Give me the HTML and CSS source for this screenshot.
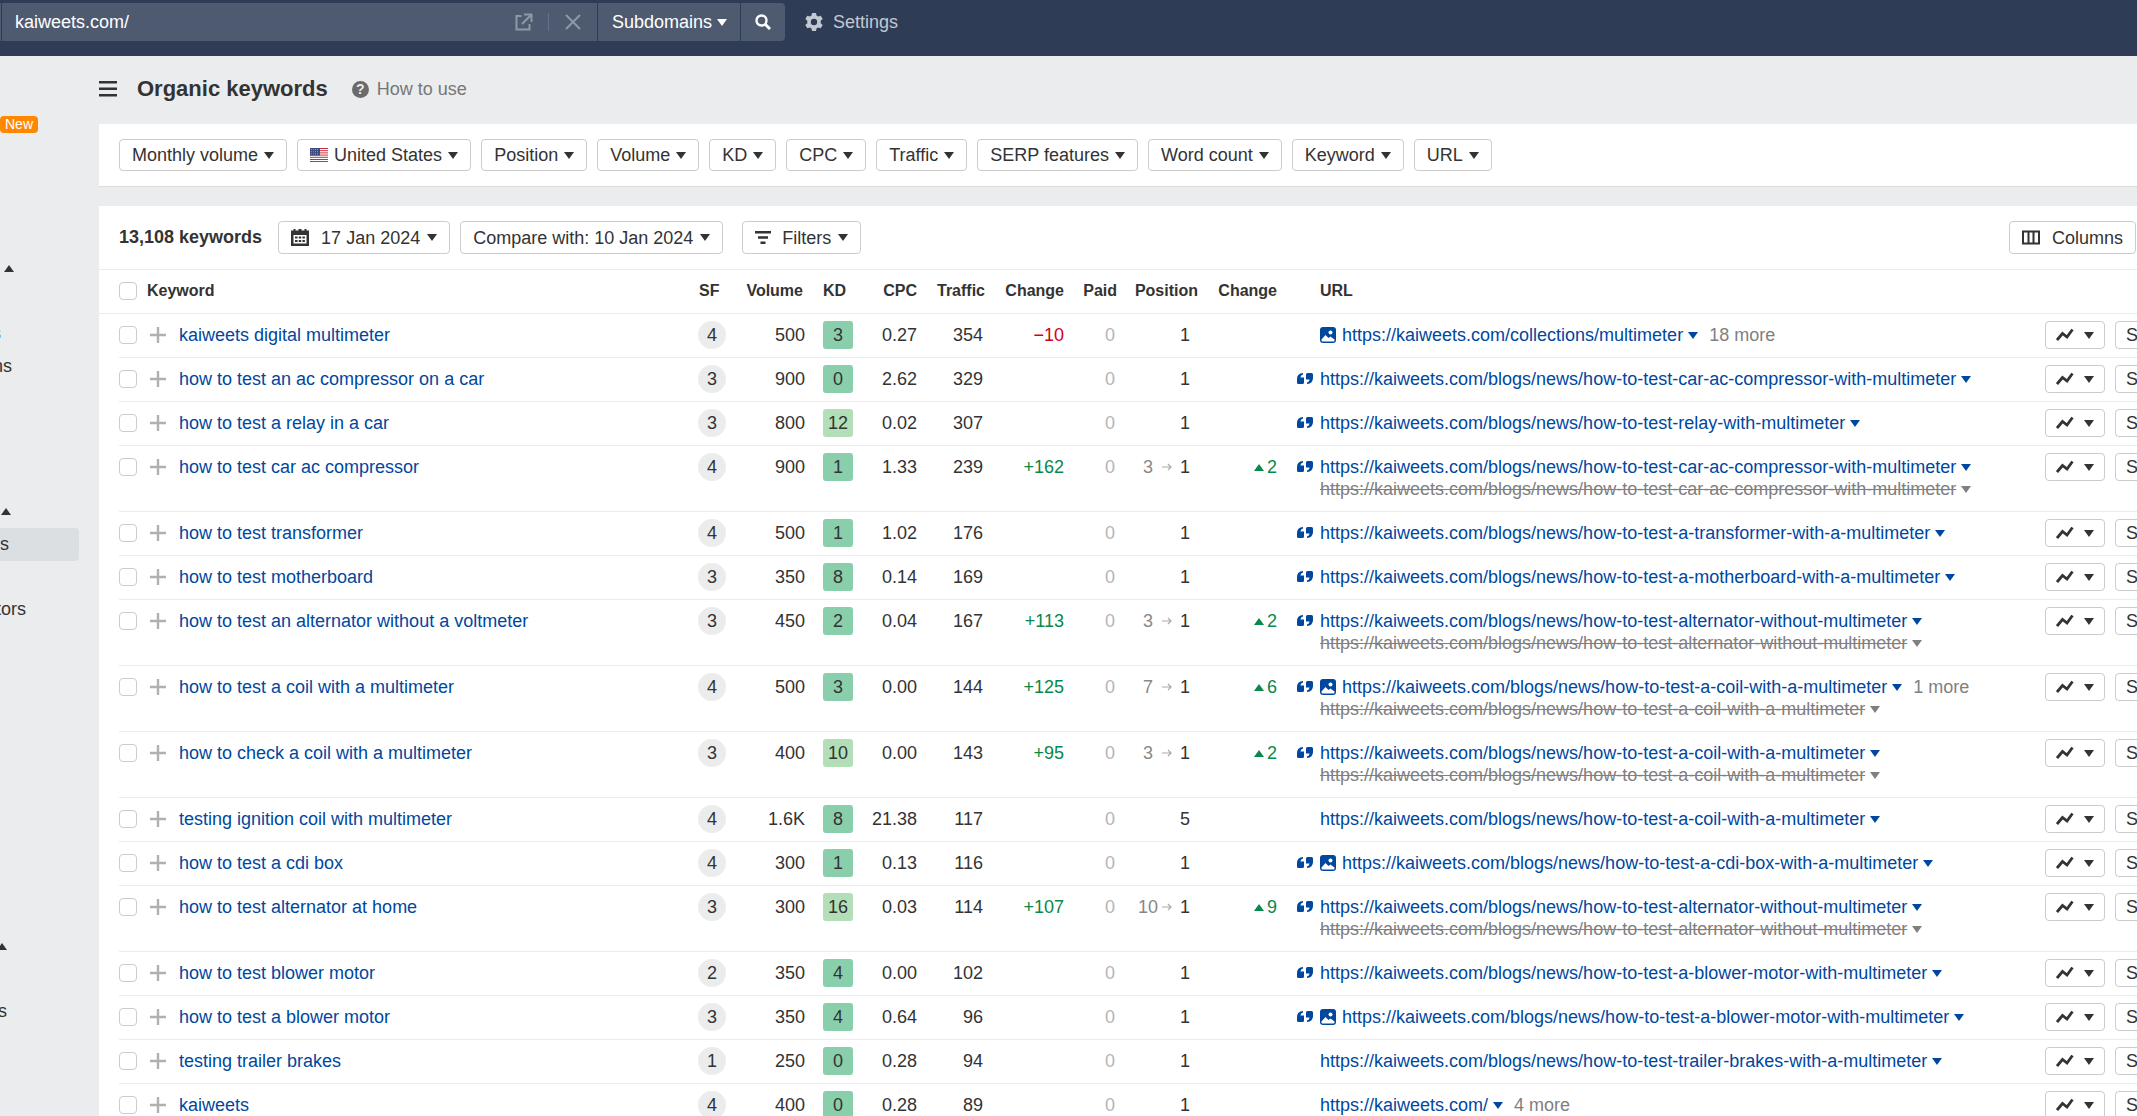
FILE: index.html
```html
<!DOCTYPE html>
<html lang="en">
<head>
    <meta charset="UTF-8">
    <meta name="viewport" content="width=device-width, initial-scale=1.0">
    <title>Organic keywords</title>
    <link rel="stylesheet" href="styles.css">
</head>
<body>
    <svg class="sprite" aria-hidden="true">
        <symbol id="i-plus" viewBox="0 0 16 16"><path d="M8 0v16M0 8h16" fill="none" stroke="currentColor" stroke-width="2.4"/></symbol>
        <symbol id="i-quote" viewBox="0 0 16 12">
            <path d="M6 0v1.600Q3.600 2 3.400 4.400H7V9.500Q7 11 5.500 11H1.500Q0 11 0 9.500V6Q0 .6 6 0Z" fill="currentColor"/>
            <path d="M10 11V9.400Q12.400 9 12.600 6.600H9V1.500Q9 0 10.500 0H14.500Q16 0 16 1.500V5Q16 10.400 10 11Z" fill="currentColor"/>
        </symbol>
        <symbol id="i-image" viewBox="0 0 16 16">
            <rect width="16" height="16" rx="3" fill="currentColor"/>
            <circle cx="10.500" cy="5.500" r="2" fill="#fff"/>
            <path d="M1.500 12.500L5.500 8L8.500 11L10.500 9.500L14.500 12.500V13.500Q14.500 14.500 13.500 14.500H2.500Q1.500 14.500 1.500 13.500Z" fill="#fff"/>
        </symbol>
        <symbol id="i-chart" viewBox="0 0 18 14"><path d="M1 12L6.500 5.500L11 9L16.500 1.500" fill="none" stroke="currentColor" stroke-width="2.800"/></symbol>
        <symbol id="i-arrow" viewBox="0 0 10 8"><path d="M0 4h9M6 1l3 3l-3 3" fill="none" stroke="currentColor" stroke-width="1.200"/></symbol>
    </svg>

    <header class="topbar">
        <div class="search">
            <div class="search-field">
                <input type="text" aria-label="Domain or URL" value="kaiweets.com/">
                <button class="icon-button" aria-label="Open in new tab">
                    <svg width="18" height="18" viewBox="0 0 18 18" fill="none" stroke="currentColor" stroke-width="2"><path d="M6.500 3H1.500v13.500h13V11M9 1.500h7.500V9M16 2L7 11"/></svg>
                </button>
                <span class="divider"></span>
                <button class="icon-button" aria-label="Clear">
                    <svg width="16" height="16" viewBox="0 0 16 16" fill="none" stroke="currentColor" stroke-width="2"><path d="M1 1l14 14M15 1L1 15"/></svg>
                </button>
            </div>
            <div class="mode">
                <select aria-label="Mode"><option>Subdomains</option></select>
                <span class="caret"></span>
            </div>
            <button class="search-button" aria-label="Search">
                <svg width="16" height="16" viewBox="0 0 16 16" fill="none" stroke="currentColor"><circle cx="6.500" cy="6.500" r="5" stroke-width="2.400"/><path d="M10 10l5 5" stroke-width="3"/></svg>
            </button>
        </div>
        <button class="settings">
            <svg width="18" height="18" viewBox="0 0 18 18" fill="currentColor" fill-rule="evenodd"><path d="M7 0h4l.5 2.600 1.700 1 2.500-.9 2 3.400-2 1.700v2.400l2 1.700-2 3.400-2.500-.9-1.700 1L11 18H7l-.5-2.600-1.700-1-2.500.9-2-3.400 2-1.700V7.800l-2-1.700 2-3.400 2.500.9 1.700-1zM9 5.800a3.200 3.200 0 1 0 0 6.400a3.200 3.200 0 1 0 0-6.400z"/></svg>
            Settings
        </button>
    </header>

    <div class="layout">
        <nav class="sidebar">
            <span class="badge-new">New</span>
            <ul class="nav-group nav-group-first">
                <li class="nav-toggle"><span class="caret-up"></span></li>
                <li class="nav-gap nav-link"><a href="#">s</a></li>
                <li class="nav-overview"><a href="#">ns</a></li>
            </ul>
            <ul class="nav-group nav-group-search">
                <li class="nav-toggle"><span class="caret-up"></span></li>
                <li class="active"><a href="#">s</a></li>
                <li class="nav-gap"><a href="#">tors</a></li>
            </ul>
            <ul class="nav-group nav-group-last">
                <li class="nav-toggle"><span class="caret-up"></span></li>
                <li class="nav-gap"><a href="#">s</a></li>
            </ul>
        </nav>

        <main>
            <div class="title-row">
                <button class="menu-button" aria-label="Toggle menu">
                    <svg width="18" height="16" viewBox="0 0 18 16" fill="currentColor"><path d="M0 0h18v2.500H0zM0 6.500h18v2.500H0zM0 13h18v2.500H0z"/></svg>
                </button>
                <h1>Organic keywords</h1>
                <a class="help" href="#"><span class="help-icon">?</span>How to use</a>
            </div>

            <section class="card filters">
                <button class="btn">Monthly volume<span class="caret"></span></button>
                <button class="btn">
                    <svg class="flag" width="18" height="14" viewBox="0 0 18 14">
                        <rect width="18" height="14" fill="#fff"/>
                        <path d="M0 .5h18M0 2.700h18M0 4.900h18M0 7.100h18M0 9.300h18M0 11.500h18M0 13.500h18" stroke="#c8313e"/>
                        <rect width="10" height="7.500" fill="#3a4a7d"/>
                        <path d="M1 1.500h8M1 3.700h8M1 5.900h8" stroke="#8f9abb" stroke-dasharray="1 1"/>
                    </svg>
                    United States<span class="caret"></span>
                </button>
                <button class="btn">Position<span class="caret"></span></button>
                <button class="btn">Volume<span class="caret"></span></button>
                <button class="btn">KD<span class="caret"></span></button>
                <button class="btn">CPC<span class="caret"></span></button>
                <button class="btn">Traffic<span class="caret"></span></button>
                <button class="btn">SERP features<span class="caret"></span></button>
                <button class="btn">Word count<span class="caret"></span></button>
                <button class="btn">Keyword<span class="caret"></span></button>
                <button class="btn">URL<span class="caret"></span></button>
            </section>

            <section class="card">
                <div class="toolbar">
                    <strong class="total">13,108 keywords</strong>
                    <button class="btn">
                        <svg class="calendar" width="18" height="17" viewBox="0 0 18 17">
                            <path d="M0 1.500h2.500V0h2v1.500h3V0h3v1.500h3V0h2v1.500H18V17H0z" fill="#333"/>
                            <path d="M2.500 6h13v8.500h-13z" fill="#fff"/>
                            <path d="M4 8.500h10M4 12h10" stroke="#333" stroke-width="2.200" stroke-dasharray="2.500 1.200"/>
                        </svg>
                        17 Jan 2024<span class="caret"></span>
                    </button>
                    <button class="btn">Compare with: 10 Jan 2024<span class="caret"></span></button>
                    <button class="btn btn-filters">
                        <svg class="lines" width="16" height="13" viewBox="0 0 16 13" fill="#333"><path d="M0 0h16v2.500H0zM3 5.200h10v2.500H3zM5.500 10.400h5v2.500h-5z"/></svg>
                        Filters<span class="caret"></span>
                    </button>
                    <button class="btn btn-columns">
                        <svg width="18" height="15" viewBox="0 0 18 15" fill="none" stroke="#333" stroke-width="2"><path d="M1 1.500h16v12H1zM6.500 1v13M11.500 1v13"/></svg>
                        Columns
                    </button>
                </div>

                <table class="keywords">
                    <colgroup>
                        <col class="c-check"><col class="c-plus"><col class="c-keyword"><col class="c-sf">
                        <col class="c-volume"><col class="c-kd"><col class="c-cpc"><col class="c-traffic">
                        <col class="c-change"><col class="c-paid"><col class="c-position"><col class="c-change">
                        <col><col class="c-actions">
                    </colgroup>
                    <thead>
                        <tr>
                            <th colspan="3" class="h-keyword"><label><input type="checkbox">Keyword</label></th>
                            <th class="h-sf">SF</th>
                            <th class="h-volume">Volume</th>
                            <th class="kd">KD</th>
                            <th>CPC</th>
                            <th>Traffic</th>
                            <th>Change</th>
                            <th>Paid</th>
                            <th>Position</th>
                            <th>Change</th>
                            <th class="h-url">URL</th>
                            <th></th>
                        </tr>
                    </thead>
                    <tbody id="rows"></tbody>
                </table>
            </section>
        </main>
    </div>

    <script src="script.js"></script>
</body>
</html>
```

FILE: styles.css
```css
* {
    box-sizing: border-box;
}
body {
    margin: 0;
    height: 100vh;
    display: flex;
    flex-direction: column;
    overflow: hidden;
    font-family: "Liberation Sans", Arial, sans-serif;
    font-size: 18px;
    line-height: 22px;
    color: #333;
    background-color: #ebeced;
}
button, input, select {
    font: inherit;
    color: inherit;
}
button {
    padding: 0;
    border: none;
    background: none;
    cursor: pointer;
}
a {
    color: inherit;
    text-decoration: none;
}
svg {
    display: block;
    flex: none;
}
.sprite {
    position: absolute;
    width: 0;
    height: 0;
}
.caret, .caret-up {
    flex: none;
    border: 5px solid transparent;
    border-top: 7px solid currentColor;
    border-bottom: none;
}
.caret-up {
    border-top: none;
    border-bottom: 7px solid currentColor;
}

/* Top bar */
.topbar {
    flex: none;
    display: flex;
    align-items: center;
    height: 56px;
    padding: 3px 0 15px;
    gap: 20px;
    background-color: #2f3c56;
    color: white;
}
.search {
    display: flex;
    gap: 1px;
    width: 785px;
    height: 38px;
    border-left: 1px solid #4e5a70;
    padding-left: 1px;
}
.search-field, .mode, .search-button {
    display: flex;
    align-items: center;
    background-color: #4e5a70;
}
.search-field {
    flex: 1;
    padding: 0 16px 0 13px;
    color: #8f98a8;
}
.search-field input {
    flex: 1;
    min-width: 0;
    padding: 0;
    border: none;
    outline: none;
    background: none;
    color: white;
}
.divider {
    width: 1px;
    height: 18px;
    margin: 0 16px 0 15px;
    background-color: #66728a;
}
.mode {
    position: relative;
    width: 142px;
}
.mode select {
    width: 100%;
    height: 100%;
    padding: 0 0 0 14px;
    border: none;
    appearance: none;
    background: none;
}
.mode .caret {
    position: absolute;
    right: 13px;
    pointer-events: none;
}
.search-button {
    width: 44px;
    justify-content: center;
    border-radius: 0 4px 4px 0;
}
.settings {
    display: flex;
    align-items: center;
    gap: 10px;
    color: #c3c8d1;
}

/* Layout */
.layout {
    flex: 1;
    min-height: 0;
    display: flex;
}
.sidebar {
    flex: none;
    width: 99px;
    padding-top: 60px;
    overflow: hidden;
}
.badge-new {
    display: block;
    width: 38px;
    height: 17px;
    padding-left: 5px;
    border-radius: 4px;
    background-color: #ff8800;
    color: white;
    font-size: 14px;
    line-height: 17px;
}
.nav-group {
    list-style: none;
    margin: 0;
    padding: 0;
}
.nav-group li {
    height: 33px;
    line-height: 33px;
}
.nav-group .nav-gap {
    margin-top: 32px;
}
.nav-toggle {
    display: flex;
    align-items: center;
    padding-left: 4px;
}
.nav-group-first {
    margin-top: 119px;
}
.nav-group-search {
    margin-top: 112px;
}
.nav-group-last {
    margin-top: 304px;
}
.nav-link {
    margin-left: -8px;
    color: #1a7fd0;
}
.nav-overview {
    margin-left: -7px;
}
.nav-group-search .nav-toggle {
    padding-left: 1px;
}
.nav-group-last .nav-toggle {
    margin-left: -3px;
    padding: 0;
}
.nav-group-last a {
    margin-left: -2px;
}
.nav-group-search .nav-gap {
    margin-left: -4px;
}
.nav-group .active {
    width: 79px;
    border-radius: 0 4px 4px 0;
    background-color: #dcdfe2;
}

main {
    flex: 1;
    min-width: 0;
}
.title-row {
    display: flex;
    align-items: center;
    height: 68px;
    padding-bottom: 2px;
}
h1 {
    margin: 0 24px 0 20px;
    font-size: 22px;
    line-height: 28px;
}
.help {
    display: flex;
    align-items: center;
    gap: 8px;
    color: #777;
}
.help-icon {
    width: 17px;
    height: 17px;
    border-radius: 50%;
    background-color: #6b6b6b;
    color: #ebeced;
    font-size: 14px;
    font-weight: bold;
    line-height: 17px;
    text-align: center;
}
.card {
    background-color: white;
    border-bottom: 1px solid #dcdcdc;
}
.btn {
    display: inline-flex;
    align-items: center;
    gap: 7px;
    height: 32px;
    padding: 0 12px;
    border: 1px solid #ccc;
    border-radius: 4px;
    background-color: white;
    white-space: nowrap;
}
.filters {
    display: flex;
    gap: 10px;
    margin-bottom: 19px;
    padding: 15px 20px;
}
.filters .btn {
    gap: 6px;
}
.toolbar {
    display: flex;
    gap: 10px;
    padding: 15px 1px 15px 20px;
    border-bottom: 1px solid #ebebeb;
}
.toolbar .btn {
    height: 33px;
}
.total {
    margin-right: 6px;
    line-height: 33px;
}
.calendar {
    margin-right: 5px;
}
.lines {
    margin-right: 4px;
}
.btn-filters {
    margin-left: 9px;
}
.toolbar .btn-columns {
    gap: 12px;
    margin-left: auto;
}

/* Keywords table */
.keywords {
    width: calc(100% - 20px);
    margin-left: 20px;
    border-spacing: 0;
    table-layout: fixed;
}
.c-check { width: 31px; }
.c-plus { width: 29px; }
.c-keyword { width: 519px; }
.c-sf { width: 28px; }
.c-volume { width: 79px; }
.c-kd { width: 48px; }
.c-cpc { width: 64px; }
.c-traffic { width: 68px; }
.c-change { width: 79px; }
.c-paid { width: 53px; }
.c-position { width: 81px; }
.c-actions { width: 92px; }

.keywords th, .keywords td {
    padding: 10px 0 11px;
    border-bottom: 1px solid #ebebeb;
    text-align: right;
    vertical-align: top;
    white-space: nowrap;
}
.keywords th {
    font-size: 16px;
}
.keywords .h-keyword, .keywords .h-sf, .keywords .h-url {
    text-align: left;
}
.h-keyword {
    position: relative;
}
/* carries the header rule out to the edge of the card */
.h-keyword::after {
    content: "";
    position: absolute;
    left: -20px;
    bottom: -1px;
    width: 20px;
    height: 1px;
    background-color: #ebebeb;
}
.h-keyword label {
    display: flex;
    align-items: center;
    gap: 10px;
}
.keywords .h-sf {
    padding-left: 1px;
}
.keywords .h-volume {
    padding-right: 2px;
}
.keywords .h-url {
    padding-left: 43px;
}
.keywords input {
    appearance: none;
    display: block;
    width: 18px;
    height: 18px;
    margin: 0;
    border: 1px solid #ccc;
    border-radius: 4px;
    background-color: white;
}
.keywords td input {
    margin: 2px 0;
}
.add {
    display: block;
    margin: 3px 0;
    color: #b0b0b0;
}
.keywords .keyword {
    text-align: left;
    color: #00479f;
}
.sf, .kd-value {
    display: block;
    width: 28px;
    height: 28px;
    margin: -3px 0;
    border-radius: 50%;
    background-color: #ebecec;
    line-height: 28px;
    text-align: center;
}
.keywords .kd {
    padding-left: 18px;
    text-align: left;
}
.kd-value {
    width: 30px;
    border-radius: 3px;
    background-color: #8acfab;
}
.kd-value.medium {
    background-color: #b2deb8;
}
.keywords .traffic, .keywords .paid {
    padding-right: 2px;
}
.paid {
    color: #b5b5b5;
}
.up {
    color: #08884b;
}
.down {
    color: #d0021b;
}
.keywords .position {
    padding-right: 8px;
}
.position div, .gain {
    display: flex;
    align-items: center;
    justify-content: flex-end;
}
.position .old {
    width: 20px;
    margin-right: 4px;
    color: #888;
    text-align: center;
}
.position svg {
    margin-right: 8px;
    color: #aaa;
}
.gain {
    gap: 3px;
}
.keywords .url {
    padding-left: 20px;
}
.url div {
    display: flex;
    align-items: center;
    color: #00479f;
}
.url .slot {
    flex: none;
    width: 23px;
}
.url .image {
    margin-right: 6px;
}
.url .caret {
    margin-left: 5px;
}
.url .more {
    margin-left: 11px;
    color: #808080;
}
.url .previous {
    color: #808080;
}
.url .previous a {
    text-decoration: line-through 1px;
}
.keywords .actions div {
    display: flex;
    gap: 10px;
    margin: -3px 0;
}
.actions .btn {
    height: 28px;
    padding: 0 10px;
}
.actions .trend {
    gap: 10px;
}
```

FILE: script.js
```js
const SITE = 'https://kaiweets.com/';
const NEWS = SITE + 'blogs/news/';

const keywords = [
    { keyword: 'kaiweets digital multimeter', sf: 4, volume: '500', kd: 3, cpc: '0.27', traffic: 354, change: '−10', position: 1, url: SITE + 'collections/multimeter', image: true, more: 18 },
    { keyword: 'how to test an ac compressor on a car', sf: 3, volume: '900', kd: 0, cpc: '2.62', traffic: 329, position: 1, url: NEWS + 'how-to-test-car-ac-compressor-with-multimeter', quote: true },
    { keyword: 'how to test a relay in a car', sf: 3, volume: '800', kd: 12, cpc: '0.02', traffic: 307, position: 1, url: NEWS + 'how-to-test-relay-with-multimeter', quote: true },
    { keyword: 'how to test car ac compressor', sf: 4, volume: '900', kd: 1, cpc: '1.33', traffic: 239, change: '+162', position: 1, old: 3, url: NEWS + 'how-to-test-car-ac-compressor-with-multimeter', quote: true },
    { keyword: 'how to test transformer', sf: 4, volume: '500', kd: 1, cpc: '1.02', traffic: 176, position: 1, url: NEWS + 'how-to-test-a-transformer-with-a-multimeter', quote: true },
    { keyword: 'how to test motherboard', sf: 3, volume: '350', kd: 8, cpc: '0.14', traffic: 169, position: 1, url: NEWS + 'how-to-test-a-motherboard-with-a-multimeter', quote: true },
    { keyword: 'how to test an alternator without a voltmeter', sf: 3, volume: '450', kd: 2, cpc: '0.04', traffic: 167, change: '+113', position: 1, old: 3, url: NEWS + 'how-to-test-alternator-without-multimeter', quote: true },
    { keyword: 'how to test a coil with a multimeter', sf: 4, volume: '500', kd: 3, cpc: '0.00', traffic: 144, change: '+125', position: 1, old: 7, url: NEWS + 'how-to-test-a-coil-with-a-multimeter', quote: true, image: true, more: 1 },
    { keyword: 'how to check a coil with a multimeter', sf: 3, volume: '400', kd: 10, cpc: '0.00', traffic: 143, change: '+95', position: 1, old: 3, url: NEWS + 'how-to-test-a-coil-with-a-multimeter', quote: true },
    { keyword: 'testing ignition coil with multimeter', sf: 4, volume: '1.6K', kd: 8, cpc: '21.38', traffic: 117, position: 5, url: NEWS + 'how-to-test-a-coil-with-a-multimeter' },
    { keyword: 'how to test a cdi box', sf: 4, volume: '300', kd: 1, cpc: '0.13', traffic: 116, position: 1, url: NEWS + 'how-to-test-a-cdi-box-with-a-multimeter', quote: true, image: true },
    { keyword: 'how to test alternator at home', sf: 3, volume: '300', kd: 16, cpc: '0.03', traffic: 114, change: '+107', position: 1, old: 10, url: NEWS + 'how-to-test-alternator-without-multimeter', quote: true },
    { keyword: 'how to test blower motor', sf: 2, volume: '350', kd: 4, cpc: '0.00', traffic: 102, position: 1, url: NEWS + 'how-to-test-a-blower-motor-with-multimeter', quote: true },
    { keyword: 'how to test a blower motor', sf: 3, volume: '350', kd: 4, cpc: '0.64', traffic: 96, position: 1, url: NEWS + 'how-to-test-a-blower-motor-with-multimeter', quote: true, image: true },
    { keyword: 'testing trailer brakes', sf: 1, volume: '250', kd: 0, cpc: '0.28', traffic: 94, position: 1, url: NEWS + 'how-to-test-trailer-brakes-with-a-multimeter' },
    { keyword: 'kaiweets', sf: 4, volume: '400', kd: 0, cpc: '0.28', traffic: 89, position: 1, url: SITE, more: 4 }
];

function icon(name, width, height, className = '') {
    return `<svg class="${className}" width="${width}" height="${height}"><use href="#i-${name}"/></svg>`;
}

function renderRow(row) {
    const change = row.change || '';
    const caret = '<span class="caret"></span>';
    const old = row.old ? `<span class="old">${row.old}</span>${icon('arrow', 10, 8)}` : '';
    const gain = row.old ? `<div class="gain up"><span class="caret-up"></span>${row.old - row.position}</div>` : '';
    const previous = row.old ? `<div class="previous"><span class="slot"></span><a href="#">${row.url}</a>${caret}</div>` : '';

    return `<tr>
        <td><input type="checkbox" aria-label="Select ${row.keyword}"></td>
        <td><button class="add" aria-label="Add ${row.keyword}">${icon('plus', 16, 16)}</button></td>
        <td class="keyword"><a href="#">${row.keyword}</a></td>
        <td><span class="sf">${row.sf}</span></td>
        <td>${row.volume}</td>
        <td class="kd"><span class="kd-value ${row.kd >= 10 ? 'medium' : ''}">${row.kd}</span></td>
        <td>${row.cpc}</td>
        <td class="traffic">${row.traffic}</td>
        <td class="${change.startsWith('+') ? 'up' : 'down'}">${change}</td>
        <td class="paid">0</td>
        <td class="position"><div>${old}${row.position}</div></td>
        <td>${gain}</td>
        <td class="url">
            <div>
                <span class="slot">${row.quote ? icon('quote', 16, 12) : ''}</span>
                ${row.image ? icon('image', 16, 16, 'image') : ''}
                <a href="#">${row.url}</a>${caret}
                ${row.more ? `<span class="more">${row.more} more</span>` : ''}
            </div>
            ${previous}
        </td>
        <td class="actions">
            <div>
                <button class="btn trend" aria-label="Position history">${icon('chart', 18, 14)}${caret}</button>
                <button class="btn">SERP</button>
            </div>
        </td>
    </tr>`;
}

document.getElementById('rows').innerHTML = keywords.map(renderRow).join('');
```
